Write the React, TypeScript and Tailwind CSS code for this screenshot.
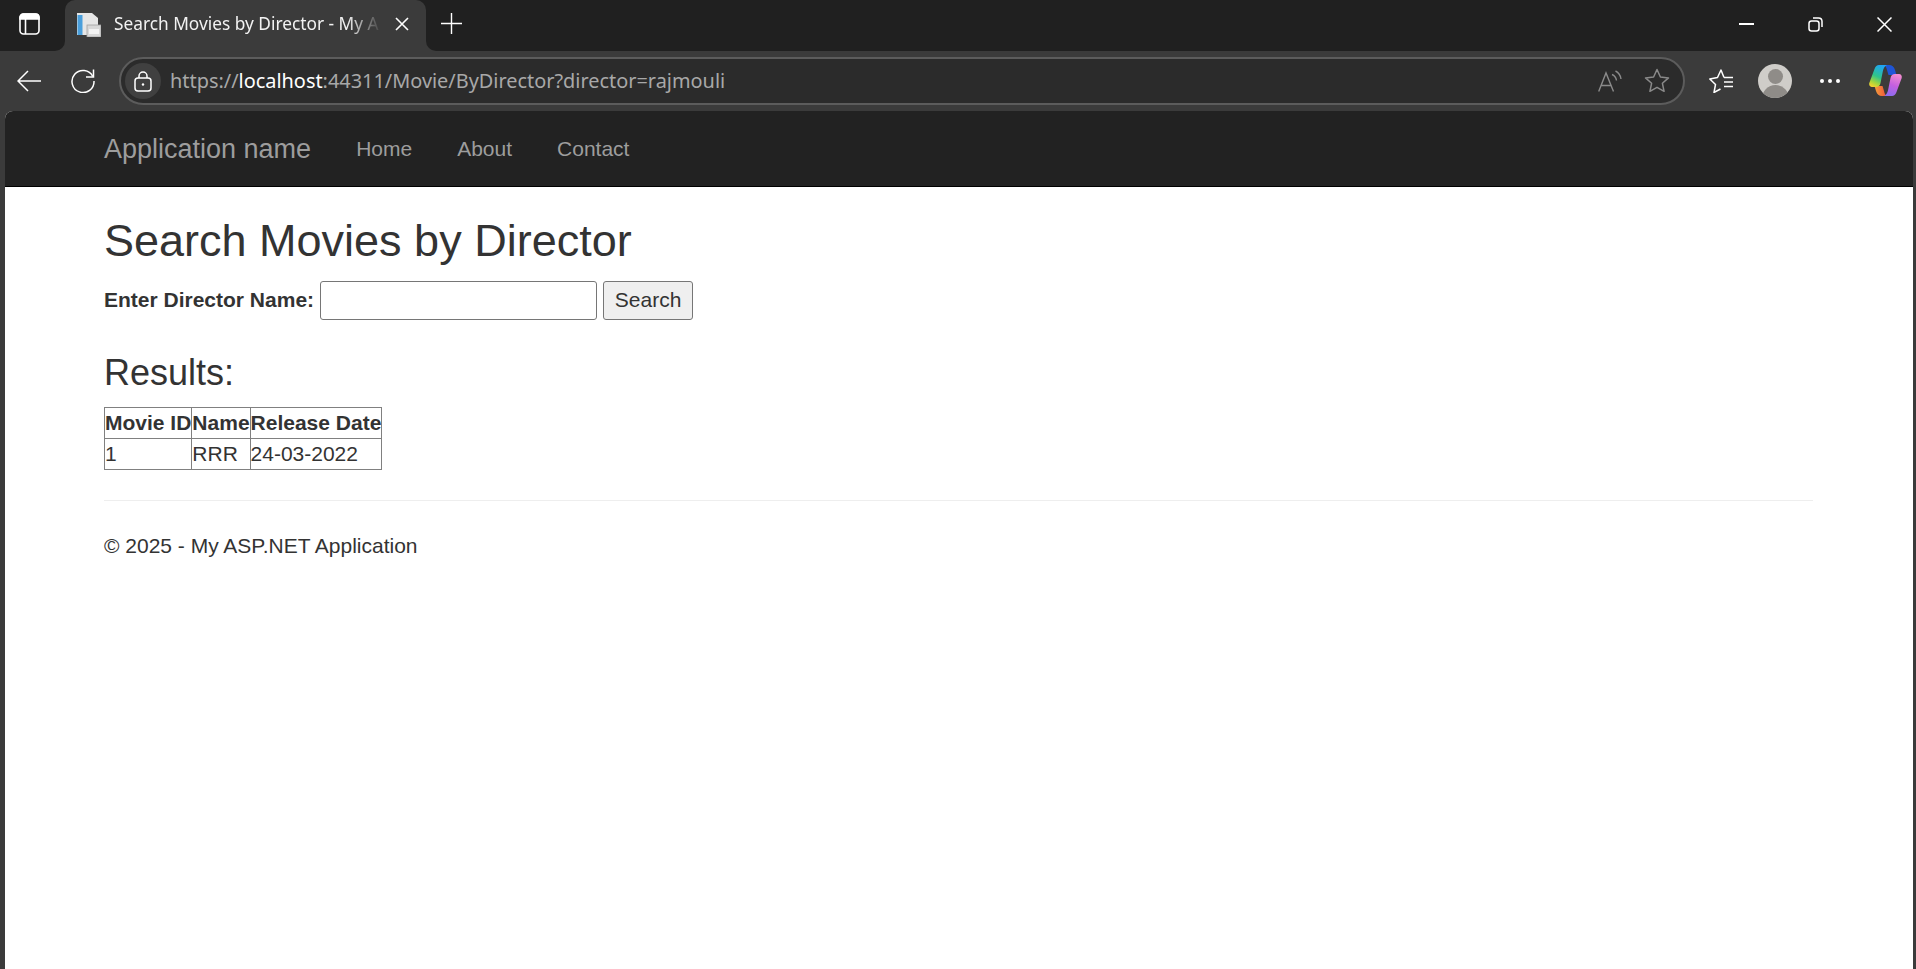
const Copilot = () => (
  <svg width="34" height="31" viewBox="0 0 34 31">
    <defs>
      <linearGradient id="cpA" x1="0.6" y1="0" x2="0.2" y2="1">
        <stop offset="0" stopColor="#1fa5f5" />
        <stop offset="0.5" stopColor="#2fc48a" />
        <stop offset="0.8" stopColor="#a8d63c" />
        <stop offset="1" stopColor="#f6d32f" />
      </linearGradient>
      <linearGradient id="cpB" x1="0.6" y1="0" x2="0.3" y2="1">
        <stop offset="0" stopColor="#f08ad0" />
        <stop offset="0.5" stopColor="#c45fe0" />
        <stop offset="1" stopColor="#8a6cf0" />
      </linearGradient>
      <linearGradient id="cpC" x1="0" y1="0" x2="1" y2="0">
        <stop offset="0" stopColor="#f5a13a" />
        <stop offset="1" stopColor="#ef4f3c" />
      </linearGradient>
    </defs>
    <path d="M18 0h2c3 0 5 1.500 6 5l1.500 5h-8L18 5c-.5-2-1-4-3-5z" fill="#1f55d6" />
    <path d="M15 31h-2c-3 0-5-1.500-6-5l-1.500-5h8L15 26c.5 2 1 4 3 5z" fill="url(#cpC)" />
    <path d="M10 0h8c-2.500 1-3.500 3.500-4.200 6.500L11.500 18c-.5 2.500-2 4-4.500 4H3c-2 0-3.300-2-2.700-4L5.500 4C6.400 1.500 8 0 10 0z" fill="url(#cpA)" />
    <path d="M23 31h-8c2.500-1 3.500-3.500 4.200-6.500L21.500 13c.5-2.500 2-4 4.500-4h4c2 0 3.300 2 2.700 4l-5.200 14c-.9 2.500-2.500 4-4.500 4z" fill="url(#cpB)" />
  </svg>
);

export default function App() {
  return (
    <div className="flex h-[969px] flex-col overflow-hidden bg-[#3b3b3b] font-['Liberation_Sans',Arial,sans-serif]">
      {/* tab strip */}
      <div className="flex h-[51px] text-white">
        <div className="flex w-[65px] items-center rounded-br-[10px] bg-[#202020] pb-[3px] pl-[19px]">
          <svg width="21" height="22" viewBox="0 0 21 22" fill="none" stroke="#fff" strokeWidth="1.600">
            <path d="M1 6V4.500C1 2.500 2.500 1 4.500 1h12C18.500 1 20 2.500 20 4.500V6z" fill="#fff" />
            <rect x="1" y="1" width="19" height="20" rx="3.500" />
            <path d="M6.500 6v15" />
          </svg>
        </div>
        <div className="bg-[#202020]">
          <div className="flex h-[51px] w-[361px] items-center rounded-t-[10px] bg-[#3b3b3b] pb-[3px] pl-[11px]">
            <svg width="25" height="25" viewBox="0 0 25 25">
              <path d="M1 1h15l6 5v17H1z" fill="#e6e6e6" />
              <rect x="1.500" y="3" width="5" height="20" fill="#4a9fdc" />
              <rect x="11" y="13" width="14" height="12" fill="#d8d8d8" stroke="#a0a0a0" strokeWidth="0.800" />
              <rect x="13" y="17" width="10" height="5" fill="#f2f2f2" />
            </svg>
            <div className="ml-[13px] w-[268px] overflow-hidden whitespace-nowrap font-['Noto_Sans',sans-serif] text-[17.3px] text-[#f2f2f2] [mask-image:linear-gradient(to_right,#000_87%,transparent)]">
              Search Movies by Director - My A
            </div>
            <svg width="14" height="14" viewBox="0 0 14 14" stroke="#fff" strokeWidth="1.600" className="ml-[13px]">
              <path d="m1 1 12 12M13 1 1 13" />
            </svg>
          </div>
        </div>
        <div className="flex flex-1 items-center rounded-bl-[10px] bg-[#202020] pb-[3px] pl-[15px]">
          <svg width="21" height="21" viewBox="0 0 21 21" stroke="#fff" strokeWidth="1.400" className="mb-[1px]">
            <path d="M10.500 0v21M0 10.500h21" />
          </svg>
          <div className="ml-auto flex items-center">
            <div className="h-[2px] w-[15px] bg-white" />
            <svg width="15" height="15" viewBox="0 0 15 15" fill="none" stroke="#fff" strokeWidth="1.500" className="ml-[54px]">
              <rect x="1" y="4" width="10" height="10" rx="2.500" />
              <path d="M5 1h5.500C12.500 1 14 2.500 14 4.500V10" />
            </svg>
            <svg width="15" height="15" viewBox="0 0 15 15" stroke="#fff" strokeWidth="1.500" className="ml-[54px] mr-[24px]">
              <path d="m.5.500 14 14M14.500.500l-14 14" />
            </svg>
          </div>
        </div>
      </div>

      {/* toolbar */}
      <div className="flex h-[60px] items-center pb-[1px] text-white">
        <svg width="24" height="22" viewBox="0 0 24 22" fill="none" stroke="#fff" strokeWidth="1.500" className="ml-[17px]">
          <path d="M1 11h23M11 1 1 11l10 10" />
        </svg>
        <svg width="24" height="24" viewBox="0 0 24 24" fill="none" stroke="#fff" strokeWidth="1.500" className="ml-[30px]">
          <path d="M21.800 7.500A11 11 0 1 0 23 12" />
          <path d="M22.500 .5v7.500H15" />
        </svg>
        <div className="ml-[24px] flex h-[48px] w-[1566px] items-center rounded-[24px] border-2 border-[#5c5c5c] bg-[#2b2b2b] pl-[4px]">
          <div className="flex h-[36px] w-[36px] items-center justify-center rounded-full bg-[#404040]">
            <svg width="20" height="22" viewBox="0 0 20 22" fill="none" stroke="#fff" strokeWidth="1.500">
              <rect x="2" y="8" width="16" height="13" rx="3" />
              <path d="M6 8V6a4 4 0 0 1 8 0v2" />
              <circle cx="10" cy="14.500" r="1.200" fill="#fff" stroke="none" />
            </svg>
          </div>
          <div className="ml-[9px] font-['Noto_Sans',sans-serif] text-[19.9px] text-[#a8a8a8]">
            https://<span className="text-white">localhost</span>:44311/Movie/ByDirector?director=rajmouli
          </div>
          <div className="ml-auto flex items-center pr-[13px] text-[#8a8a8a]">
            <svg width="24" height="22" viewBox="0 0 24 22" fill="none" stroke="currentColor" strokeWidth="1.400">
              <path d="M.7 21.500 8 3l7.500 18.500M3 15.500h10.500" />
              <path d="M14 4.500c2.500 1 4 3 4.500 6M17.500 1c3 1.500 5 4.500 5.500 8" />
            </svg>
            <svg width="26" height="26" viewBox="0 0 26 26" fill="none" stroke="currentColor" strokeWidth="1.500" className="ml-[22px]">
              <path d="m13 1.500 3.400 7.500 8.100.9-6.100 5.400 1.700 8L13 19.300 5.900 23.300l1.700-8-6.100-5.400 8.100-.9z" strokeLinejoin="round" />
            </svg>
          </div>
        </div>
        <svg width="24" height="24" viewBox="0 0 24 24" fill="none" stroke="#fff" strokeWidth="1.500" className="ml-[24px]">
          <path d="M15 8.500 12 1 8.500 8.500 .8 10l5.700 5.500-1.500 8 6.500-3.500M15 8.500h9M15 13h9M15 17.500h9" strokeLinejoin="round" />
        </svg>
        <div className="relative ml-[25px] h-[34px] w-[34px] overflow-hidden rounded-full bg-[#cfcdc9]">
          <div className="absolute left-[10px] top-[5px] h-[15px] w-[15px] rounded-full bg-[#8f8c88]" />
          <div className="absolute left-[4px] top-[21px] h-[27px] w-[27px] rounded-full bg-[#8f8c88]" />
        </div>
        <div className="ml-[28px] flex gap-[4px]">
          <div className="h-[4px] w-[4px] rounded-full bg-white" />
          <div className="h-[4px] w-[4px] rounded-full bg-white" />
          <div className="h-[4px] w-[4px] rounded-full bg-white" />
        </div>
        <div className="ml-[29px]">
          <Copilot />
        </div>
      </div>

      {/* page */}
      <div className="ml-[5px] mr-[3px] flex min-h-0 flex-1 flex-col overflow-hidden rounded-t-[8px] bg-white text-[#333]">
        <div className="flex h-[76px] shrink-0 items-center border-b border-black bg-[#222] pl-[99px] text-[#9d9d9d]">
          <span className="pt-[1px] text-[27px]">Application name</span>
          <span className="ml-[45px] text-[21px]">Home</span>
          <span className="ml-[45px] text-[21px]">About</span>
          <span className="ml-[45px] text-[21px]">Contact</span>
        </div>
        <div className="pl-[99px] pr-[100px]">
          <h2 className="mt-[29px] text-[45px] leading-[50px]">Search Movies by Director</h2>
          <div className="mt-[15px] flex items-center text-[21px]">
            <label className="pb-[2px] font-bold">Enter Director Name:</label>
            <input className="ml-[6px] h-[39px] w-[277px] rounded-[3px] border border-[#767676] bg-white" />
            <button className="ml-[6px] h-[39px] w-[90px] rounded-[3px] border border-[#767676] bg-[#efefef] pb-[2px]">Search</button>
          </div>
          <h3 className="mt-[33px] text-[36px] leading-[40px]">Results:</h3>
          <table className="mt-[14px] border-collapse text-[21px] leading-[30px]">
            <thead>
              <tr>
                <th className="border border-[#808080] p-0 text-left">Movie ID</th>
                <th className="border border-[#808080] p-0 text-left">Name</th>
                <th className="border border-[#808080] p-0 text-left">Release Date</th>
              </tr>
            </thead>
            <tbody>
              <tr>
                <td className="border border-[#808080] p-0">1</td>
                <td className="border border-[#808080] p-0">RRR</td>
                <td className="border border-[#808080] p-0">24-03-2022</td>
              </tr>
            </tbody>
          </table>
          <hr className="mt-[30px] border-[#eee]" />
          <p className="mt-[30px] text-[21px] leading-[30px]">© 2025 - My ASP.NET Application</p>
        </div>
      </div>
    </div>
  );
}
